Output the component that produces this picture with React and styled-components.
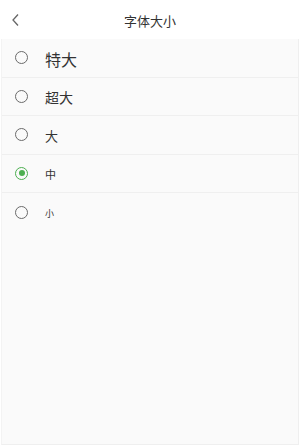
import React, { useState } from "react";
import styled, { createGlobalStyle } from "styled-components";

const Global = createGlobalStyle`
  html, body { margin: 0; padding: 0; background: #ffffff; }
  body { font-family: "Noto Sans CJK SC", "Noto Sans", sans-serif; }
  * { box-sizing: border-box; }
`;

const Page = styled.div`
  width: 300px;
  height: 447px;
  display: flex;
  flex-direction: column;
  background: #ffffff;
`;

const Header = styled.div`
  height: 39px;
  flex: 0 0 39px;
  display: flex;
  align-items: center;
  justify-content: center;
  position: relative;
  background: #ffffff;
`;

const Back = styled.button`
  position: absolute;
  left: 8px;
  top: 11px;
  width: 16px;
  height: 18px;
  border: 0;
  background: transparent;
  padding: 0;
  display: flex;
  align-items: center;
  justify-content: center;
`;

const Title = styled.div`
  font-size: 13px;
  color: #333333;
  line-height: 1;
  margin-top: 1px;
`;

const Panel = styled.div`
  flex: 1;
  margin: 0 1px 2px 1px;
  background: #fafafa;
  border-left: 1px solid #f3f3f3;
  border-right: 1px solid #efefef;
  border-bottom: 1px solid #efefef;
  display: flex;
  flex-direction: column;
`;

const Row = styled.div`
  height: 38.5px;
  display: flex;
  align-items: center;
  padding-left: 13px;
  border-bottom: ${(p) => (p.$last ? "none" : "1px solid #efefef")};
  cursor: pointer;
`;

const Radio = styled.span`
  width: 13px;
  height: 13px;
  border-radius: 50%;
  border: 1.7px solid ${(p) => (p.$checked ? "#4caf50" : "#6a6a6a")};
  display: flex;
  align-items: center;
  justify-content: center;
  flex: 0 0 auto;
  &::after {
    content: "";
    width: 6px;
    height: 6px;
    border-radius: 50%;
    background: ${(p) => (p.$checked ? "#4caf50" : "transparent")};
  }
`;

const Label = styled.span`
  margin-left: 17px;
  font-size: ${(p) => p.$size}px;
  color: #333333;
  line-height: 1;
  margin-top: 2px;
`;

const options = [
  { label: "特大", size: 16 },
  { label: "超大", size: 14 },
  { label: "大", size: 13 },
  { label: "中", size: 11 },
  { label: "小", size: 9 },
];

export default function App() {
  const [sel, setSel] = useState(3);
  return (
    <>
      <Global />
      <Page>
        <Header>
          <Back aria-label="back">
            <svg width="10" height="14" viewBox="0 0 10 14">
              <path d="M7 1.5 L2 7 L7 12.5" fill="none" stroke="#666" strokeWidth="1.3" />
            </svg>
          </Back>
          <Title>字体大小</Title>
        </Header>
        <Panel>
          {options.map((o, i) => (
            <Row key={o.label} $last={i === options.length - 1} onClick={() => setSel(i)}>
              <Radio $checked={sel === i} />
              <Label $size={o.size}>{o.label}</Label>
            </Row>
          ))}
        </Panel>
      </Page>
    </>
  );
}
